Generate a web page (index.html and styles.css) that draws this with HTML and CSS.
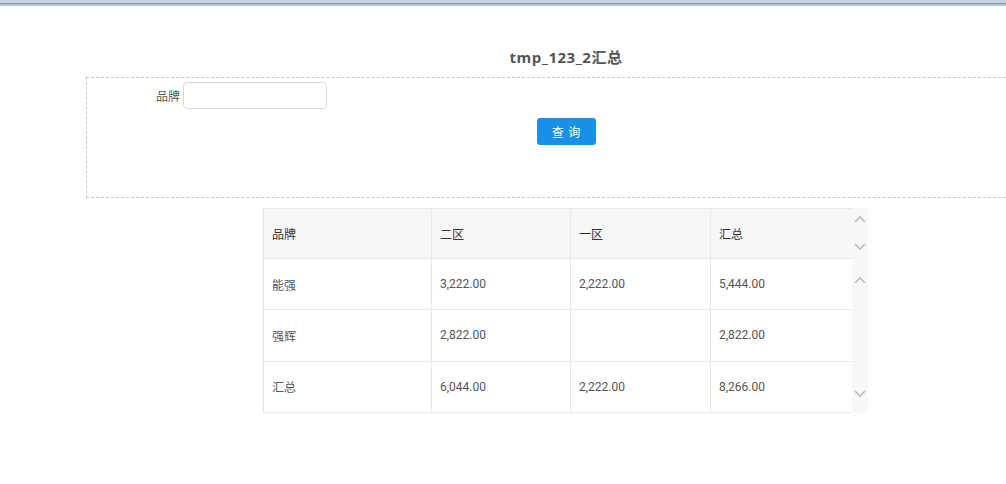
FILE: index.html
```html
<!DOCTYPE html>
<html lang="zh">
<head>
<meta charset="utf-8">
<title>tmp_123_2汇总</title>
<link rel="stylesheet" href="styles.css">
</head>
<body>
<div class="topbar"></div>
<div class="page">
  <h1 class="title">tmp_123_2汇总</h1>
  <div class="query-box">
    <div class="field-row">
      <label class="field-label" for="brand">品牌</label>
      <input class="field-input" id="brand" type="text">
    </div>
    <div class="btn-row">
      <button class="btn-query" type="button">查 询</button>
    </div>
  </div>
  <div class="table-wrap">
    <table class="grid">
      <colgroup>
        <col class="c1"><col class="c2"><col class="c3"><col class="c4">
      </colgroup>
      <thead>
        <tr><th>品牌</th><th>二区</th><th>一区</th><th>汇总</th></tr>
      </thead>
      <tbody>
        <tr><td>能强</td><td>3,222.00</td><td>2,222.00</td><td>5,444.00</td></tr>
        <tr><td>强辉</td><td>2,822.00</td><td></td><td>2,822.00</td></tr>
        <tr><td>汇总</td><td>6,044.00</td><td>2,222.00</td><td>8,266.00</td></tr>
      </tbody>
    </table>
    <div class="scrollcol">
      <div class="sc-head">
        <svg class="chev" viewBox="0 0 12 8"><path d="M1 7 L6 2 L11 7" /></svg>
        <svg class="chev" viewBox="0 0 12 8"><path d="M1 1 L6 6 L11 1" /></svg>
      </div>
      <div class="sc-body">
        <svg class="chev" viewBox="0 0 12 8"><path d="M1 7 L6 2 L11 7" /></svg>
        <svg class="chev" viewBox="0 0 12 8"><path d="M1 1 L6 6 L11 1" /></svg>
      </div>
    </div>
  </div>
</div>
</body>
</html>
```
FILE: styles.css
```css
html, body {
  margin: 0;
  padding: 0;
  overflow: hidden;
  background: #fff;
}
body {
  font-family: "Roboto", "Noto Sans CJK SC", sans-serif;
  font-size: 12px;
  color: #555;
}
.topbar {
  height: 6px;
  background: linear-gradient(to bottom, #c6d2dd 0, #c6d2dd 3px, #8796a8 3px, #8796a8 4px, #b2c2d8 4px, #b2c2d8 6px);
}
.page {
  margin-left: 86px;
  width: 960px;
}
.title {
  margin: 42px 0 11px;
  height: 18px;
  line-height: 18px;
  font-family: "Open Sans", "Noto Sans CJK SC", sans-serif;
  font-size: 15px;
  letter-spacing: 0.5px;
  font-weight: bold;
  color: #555;
  text-align: center;
}
.query-box {
  box-sizing: border-box;
  height: 121px;
  border: 1px dashed #c8c8c8;
  padding-top: 4px;
}
.field-row {
  display: flex;
  align-items: center;
  gap: 3px;
}
.field-label {
  width: 93px;
  text-align: right;
  color: #555;
}
.field-input {
  box-sizing: border-box;
  width: 144px;
  height: 27px;
  border: 1px solid #d9d9d9;
  border-radius: 4px;
  margin: 0;
  padding: 0 6px;
  outline: none;
}
.btn-row {
  display: flex;
  justify-content: center;
  margin-top: 9px;
}
.btn-query {
  width: 59px;
  height: 27px;
  border: none;
  border-radius: 3px;
  background: #1890e6;
  color: #fff;
  font-family: "Noto Sans CJK SC", sans-serif;
  font-size: 12px;
  letter-spacing: 1px;
  padding: 0;
  margin-left: 1px;
}
.table-wrap {
  display: flex;
  width: 605px;
  margin: 10px 0 0 177px;
}
.grid {
  border-collapse: collapse;
  table-layout: fixed;
  width: 588px;
}
.c1 { width: 168px; }
.c2 { width: 139px; }
.c3 { width: 140px; }
.c4 { width: 141px; }
.grid th, .grid td {
  height: 50px;
  box-sizing: border-box;
  border: 1px solid #e8e8e8;
  padding: 0 0 0 8px;
  text-align: left;
  font-weight: normal;
  font-size: 12px;
}
.grid th {
  background: #f6f6f6;
  color: #333;
}
.grid td {
  color: #555;
}
.grid tr > :last-child { border-right: none; }
.scrollcol {
  width: 17px;
  background: #f7f7f7;
  display: flex;
  flex-direction: column;
  height: 205px;
}
.sc-head {
  height: 51px;
  display: flex;
  flex-direction: column;
  align-items: center;
  justify-content: space-between;
  padding: 7px 0 8px;
  box-sizing: border-box;
}
.sc-body {
  flex: 1;
  display: flex;
  flex-direction: column;
  align-items: center;
  justify-content: space-between;
  padding: 17px 0 15px;
}
.chev {
  width: 12px;
  height: 8px;
  fill: none;
  stroke: #bdbdbd;
  stroke-width: 1.6;
}
```
